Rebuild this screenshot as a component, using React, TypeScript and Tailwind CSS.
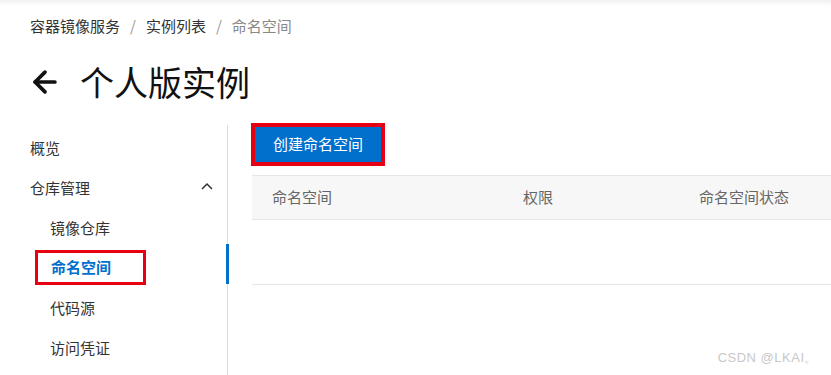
import { ArrowLeft } from "lucide-react";

const FONT = "font-['Microsoft_YaHei','Noto_Sans_CJK_SC','Noto_Sans',sans-serif]";

const subItems = ["镜像仓库", "命名空间", "代码源", "访问凭证"];

function Sidebar() {
  return (
    <aside className="relative w-[228px] mt-[2px] pt-[3px] border-r border-[#dcdcdc] shrink-0">
      <div className="h-[40px] flex items-center pl-[30px] text-[15px] text-[#333]">概览</div>
      <div className="h-[40px] flex items-center justify-between pl-[30px] pr-[14px] text-[15px] text-[#333]">
        <span>仓库管理</span>
        <svg width="12" height="8" viewBox="0 0 12 8" className="mb-[4px]">
          <polyline points="1,7 6,2 11,7" fill="none" stroke="#333" strokeWidth="1.5" />
        </svg>
      </div>
      {subItems.map((item) =>
        item === "命名空间" ? (
          <div key={item} className="h-[40px] flex items-center pl-[35px]">
            <div className="w-[111px] h-[35px] mt-[-1px] border-[3px] border-[#e60012] pl-[13px] flex items-center text-[15px] font-bold text-[#0070cc]">
              {item}
            </div>
          </div>
        ) : (
          <div key={item} className="h-[40px] flex items-center pl-[50px] text-[15px] text-[#333]">
            {item}
          </div>
        )
      )}
      <div className="absolute right-[-2px] top-[119px] w-[3px] h-[40px] bg-[#0070cc]" />
    </aside>
  );
}

function NamespaceTable() {
  return (
    <div className="ml-[1px] mt-[9px]">
      <div className="h-[45px] flex items-center bg-[#f7f7f7] border-y border-[#e6e6e6] text-[15px] text-[#666]">
        <div className="w-[251px] pl-[20px]">命名空间</div>
        <div className="w-[176px] pl-[20px]">权限</div>
        <div className="flex-1 pl-[20px]">命名空间状态</div>
      </div>
      <div className="h-[65px] border-b border-[#e6e6e6]" />
    </div>
  );
}

export default function App() {
  return (
    <div className={`relative w-[831px] h-[375px] overflow-hidden bg-white ${FONT}`}>
      <div className="absolute top-0 left-0 right-0 h-[6px] bg-gradient-to-b from-[#f0f0f0] to-white" />

      <nav className="relative pt-[16px] pl-[30px] flex items-center h-[36px] text-[15px] leading-[20px]">
        <span className="text-[#333]">容器镜像服务</span>
        <span className="mx-[10px] text-[#999]">/</span>
        <span className="text-[#333]">实例列表</span>
        <span className="mx-[10px] text-[#999]">/</span>
        <span className="text-[#888]">命名空间</span>
      </nav>

      <div className="mt-[26px] pl-[28px] flex items-center h-[40px]">
        <ArrowLeft size={34} strokeWidth={2.6} className="text-[#111]" />
        <h1 className="ml-[18px] text-[34px] leading-[40px] text-[#111]">个人版实例</h1>
      </div>

      <div className="mt-[21px] flex h-[260px]">
        <Sidebar />
        <main className="flex-1 pl-[23px]">
          <div className="w-[134px] h-[43px] border-[4px] border-[#e60012]">
            <button className="w-full h-full bg-[#0070cc] text-white text-[15px] flex items-center justify-center">
              创建命名空间
            </button>
          </div>
          <NamespaceTable />
        </main>
      </div>

      <div className="absolute right-[13px] bottom-[8px] text-[13px] text-[#c8c8c8] tracking-[0.5px] font-['Liberation_Sans',sans-serif]">
        CSDN @LKAI。
      </div>
    </div>
  );
}
